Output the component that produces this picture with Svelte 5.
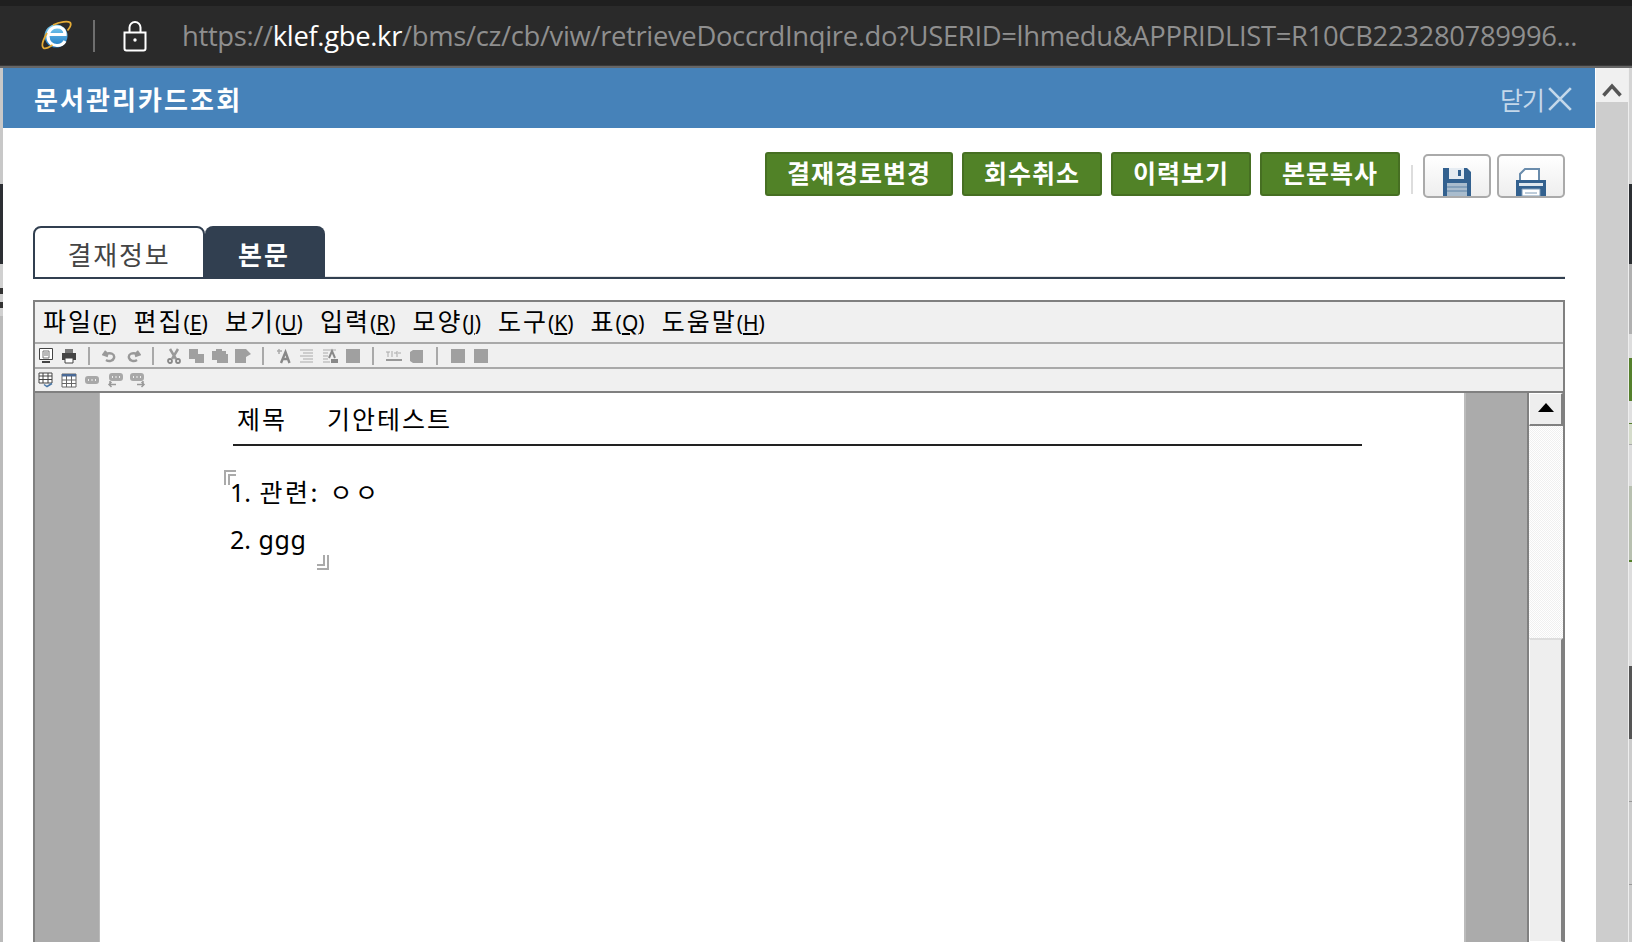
<script>
  const actions = ['결재경로변경', '회수취소', '이력보기', '본문복사'];
  const menus = [['파일', 'F'], ['편집', 'E'], ['보기', 'U'], ['입력', 'R'], ['모양', 'J'], ['도구', 'K'], ['표', 'Q'], ['도움말', 'H']];
  const rowOne = [
    ['screen', 'print', 'sep'],
    ['undo', 'redo', 'sep'],
    ['cut', 'copy', 'paste', 'format', 'sep'],
    ['font', 'lines', 'para', 'block', 'sep'],
    ['word', 'blob', 'sep'],
    ['block', 'block']
  ].flat();
  const rowTwo = ['tablecheck', 'table', 'pill', 'pillLeft', 'pillRight'];
</script>

{#snippet tool(name)}
  {#if name === 'sep'}
    <i class="sep"></i>
  {:else}
    <svg class="tool" viewBox="0 0 16 16" aria-hidden="true">
      {#if name === 'screen'}
        <path d="M1.500 .5h13v11h-13z" fill="#fff" stroke="#444"/><path d="M5 3h6v7H5z" fill="none" stroke="#777"/><path d="M6 5h4M6 7h4" stroke="#777"/><path d="M4 13h8v2H4z" fill="#444"/>
      {:else if name === 'print'}
        <path d="M4 1h8v4H4z" fill="#777"/><path d="M1 5h14v7H1z" fill="#444"/><path d="M4 10h8v5H4z" fill="#fff" stroke="#444"/>
      {:else if name === 'undo'}
        <path d="M4 3 1.500 6.500 6 8M3 6c6-2 10 0 9 4-1 3-5 4-8 2" fill="none" stroke="#999" stroke-width="2.400"/>
      {:else if name === 'redo'}
        <path d="M12 3l2.500 3.500L10 8M13 6C7 4 3 6 4 10c1 3 5 4 8 2" fill="none" stroke="#999" stroke-width="2.400"/>
      {:else if name === 'cut'}
        <path d="M4 1l6 10M12 1L6 11" stroke="#999" stroke-width="2.500"/><circle cx="4" cy="13" r="2" fill="none" stroke="#888" stroke-width="1.800"/><circle cx="12" cy="13" r="2" fill="none" stroke="#888" stroke-width="1.800"/>
      {:else if name === 'copy'}
        <path d="M0 1h9v5h6v9H6v-4H0z" fill="#a0a0a0"/>
      {:else if name === 'paste'}
        <path d="M0 3h4V1h6v2h4v3h2v9H5v-3H0z" fill="#a0a0a0"/>
      {:else if name === 'format'}
        <path d="M0 1h11l5 5-5 3v6H0z" fill="#a0a0a0"/>
      {:else if name === 'font'}
        <path d="M5 15 9.500 4l4 11M7 11h5" fill="none" stroke="#888" stroke-width="2.400"/><path d="M1 3h5M3 1v5" stroke="#aaa" stroke-width="1.500"/>
      {:else if name === 'lines'}
        <path d="M1 2h13M4 5h10M1 8h13M4 11h10M1 14h13" stroke="#aaa"/>
      {:else if name === 'para'}
        <path d="M1 2h13M1 5h5M1 8h5M1 11h5M1 14h7" stroke="#aaa"/><path d="M7 10l3-7 3 7" fill="none" stroke="#888" stroke-width="2"/><path d="M9 11h7v4H9z" fill="#888"/>
      {:else if name === 'block'}
        <path d="M1 1h14v14H1z" fill="#a0a0a0"/>
      {:else if name === 'word'}
        <path d="M0 4h4M2 4v5M6 3v6M8 5h3M11 3v6M12 5h3" stroke="#aaa"/><path d="M0 12h16" stroke="#999" stroke-width="2"/>
      {:else if name === 'blob'}
        <path d="M4 2h10v13H4l-3-2V4z" fill="#a0a0a0"/>
      {:else if name === 'tablecheck'}
        <path d="M1 1h13v10H1z" fill="#fff" stroke="#444"/><path d="M1 4h13M1 7.500h13M5 1v10M10 1v10" stroke="#444"/><path d="M6 12.500l3 2 5-3" fill="none" stroke="#4a78a8" stroke-width="1.500"/>
      {:else if name === 'table'}
        <path d="M1 2h14v13H1z" fill="#fff" stroke="#666"/><path d="M1 2h14v2.500H1z" fill="#4a6a96"/><path d="M1 8h14M1 11.500h14M5.500 4v11M10.500 4v11" stroke="#666"/>
      {:else if name === 'pill'}
        <rect x="1" y="4" width="14" height="8" rx="3" fill="#a8a8a8"/><path d="M4 8h1M7.500 8h1M11 8h1" stroke="#eee" stroke-width="2"/>
      {:else if name === 'pillLeft'}
        <rect x="2" y="1" width="14" height="8" rx="3" fill="#a8a8a8"/><path d="M5 5h1M8.500 5h1M12 5h1" stroke="#eee" stroke-width="2"/><path d="M9 12.500H2M4.500 10 2 12.500 4.500 15M3 9v3" fill="none" stroke="#999" stroke-width="1.500"/>
      {:else if name === 'pillRight'}
        <rect x="0" y="1" width="14" height="8" rx="3" fill="#a8a8a8"/><path d="M3 5h1M6.500 5h1M10 5h1" stroke="#eee" stroke-width="2"/><path d="M7 12.500h7M11.500 10l2.500 2.500-2.500 2.500M13 9v3" fill="none" stroke="#999" stroke-width="1.500"/>
      {/if}
    </svg>
  {/if}
{/snippet}

<div class="page">
  <header class="address">
    <svg class="ie" viewBox="0 0 32 32" aria-hidden="true">
      <defs>
        <linearGradient id="ieblue" x1="0" y1="0" x2="0" y2="1">
          <stop offset="0" stop-color="#7fd0f2"/><stop offset="1" stop-color="#1b78c4"/>
        </linearGradient>
      </defs>
      <circle cx="16" cy="16" r="11.500" fill="url(#ieblue)"/>
      <path d="M8 14.500h17c0-5-3.500-7.500-8-7.500-5 0-9 3.500-9 9.500 0 5.500 4 9 9 9 3.500 0 6.500-1.500 8-4.500" fill="none" stroke="#fff" stroke-width="3.200"/>
      <path d="M7 13C3 20 1 26 3.500 28c2 1.500 6-1 9-3M13 5c7-3.500 15-4 17-2.500 1.500 1.500 0 5-2.500 8" fill="none" stroke="#e5ac36" stroke-width="1.800"/>
    </svg>
    <i class="divider"></i>
    <svg class="lock" viewBox="0 0 26 32" aria-hidden="true">
      <path d="M2.500 12.500h21v16a2 2 0 0 1-2 2h-17a2 2 0 0 1-2-2zM7.500 12V7.500a5.500 5.500 0 0 1 11 0V12" fill="none" stroke="#fff" stroke-width="2"/>
      <circle cx="13" cy="20" r="1.700" fill="#fff"/>
    </svg>
    <div class="url">https://<b>klef.gbe.kr</b>/bms/cz/cb/viw/retrieveDoccrdInqire.do?USERID=lhmedu&amp;APPRIDLIST=R10CB223280789996...</div>
  </header>

  <div class="frame">
    <aside class="left-edge"></aside>
    <main class="modal">
      <div class="title">
        <h1>문서관리카드조회</h1>
        <div class="close">닫기
          <svg viewBox="0 0 24 24" aria-hidden="true"><path d="M2 2l20 20M22 2 2 22" stroke="#c4d8ea" stroke-width="2.500"/></svg>
        </div>
      </div>

      <div class="content">
        <div class="actions">
          {#each actions as label}
            <button class="green">{label}</button>
          {/each}
          <i class="act-sep"></i>
          <button class="icon-btn" aria-label="저장">
            <svg viewBox="0 0 28 28" aria-hidden="true">
              <path d="M0 0h24l4 4v24H0z" fill="#33618f"/><path d="M6 0h15v11H6z" fill="#e6ecf2"/><path d="M15 2h3v6h-3z" fill="#33618f"/><path d="M4 15h20v13H4z" fill="#a9bccd"/><path d="M4 19h20M4 23h20" stroke="#5f83a6"/>
            </svg>
          </button>
          <button class="icon-btn" aria-label="인쇄">
            <svg viewBox="0 0 32 28" aria-hidden="true">
              <path d="M10 1h14v12H5V6z" fill="#fff" stroke="#6a8cac" stroke-width="2"/>
              <path d="M1 12h30v16H1z" fill="#33618f"/><path d="M4 15h24v3H4z" fill="#dfe7ee"/><path d="M7 21h18v7H7z" fill="#fff" stroke="#7c9ab6"/><path d="M10 25h12" stroke="#7c9ab6"/>
            </svg>
          </button>
        </div>

        <div class="tabs">
          <div class="tab">결재정보</div>
          <div class="tab active">본문</div>
        </div>

        <section class="editor">
          <nav class="menu">
            {#each menus as [name, key]}
              <span class="menu-item">{name}<small>(<u>{key}</u>)</small></span>
            {/each}
          </nav>
          <div class="toolbar top">
            {#each rowOne as name}{@render tool(name)}{/each}
          </div>
          <div class="toolbar second">
            {#each rowTwo as name}{@render tool(name)}{/each}
          </div>
          <div class="workspace">
            <div class="margin-left"></div>
            <article class="sheet">
              <div class="subject"><span>제목</span><span class="subject-value">기안테스트</span></div>
              <div class="body-text">
                <span class="mark open"></span>
                <p>1. <span class="kr">관련:</span> <span class="kr jamo">ㅇ ㅇ</span></p>
                <p class="second-line">2. <span class="latin">ggg</span><span class="mark close-mark"></span></p>
              </div>
            </article>
            <div class="margin-right"></div>
            <div class="vscroll">
              <div class="arrow-btn"><span class="arrow"></span></div>
              <div class="dither"></div>
              <div class="thumb"></div>
            </div>
          </div>
        </section>
      </div>
    </main>
    <aside class="page-scroll">
      <div class="scroll-up">
        <svg viewBox="0 0 20 14" aria-hidden="true"><path d="M1.500 12.500 10 3l8.500 9.500" fill="none" stroke="#555" stroke-width="3.500"/></svg>
      </div>
      <div class="scroll-track"></div>
    </aside>
    <aside class="right-edge"></aside>
  </div>
</div>

<style>
  :global(body) { margin: 0; background: #fff; }
  .page {
    width: 1632px; height: 942px; overflow: hidden; display: flex; flex-direction: column;
    font-family: "Noto Sans CJK KR", "Noto Sans", sans-serif;
  }
  .address {
    height: 66px; box-sizing: border-box; background: #2a2a2a; border-top: 6px solid #1f1f1f; border-bottom: 1px solid #3a3a3a;
    display: flex; align-items: center; flex: none; padding-left: 40px;
  }
  .ie { width: 32px; height: 32px; flex: none; }
  .divider { width: 2px; height: 32px; background: #6e6e6e; margin-left: 21px; flex: none; }
  .lock { width: 26px; height: 32px; margin-left: 27px; flex: none; }
  .url {
    font-family: "Open Sans", sans-serif; font-size: 27.400px; color: #8f8f8f; margin-left: 34px; white-space: nowrap; letter-spacing: -0.330px;
  }
  .url b { color: #fff; font-weight: 400; }
  .frame { flex: 1; display: flex; border-top: 2px solid #666; min-height: 0; }
  .left-edge {
    width: 3px; flex: none;
    background: linear-gradient(#c8c8c8 0 116px, #2c2f33 116px 196px, #d0d0d0 196px 220px, #333 220px 226px, #d0d0d0 226px 234px, #333 234px 240px, #d0d0d0 240px 248px, #bbb 248px);
  }
  .modal { width: 1593px; flex: none; display: flex; flex-direction: column; background: #fff; }
  .title {
    height: 60px; flex: none; box-sizing: border-box; background: #4682b9; display: flex; align-items: center; justify-content: space-between;
    padding: 0 22px 0 31px; color: #fff; margin-right: 1px;
  }
  h1 { font-size: 26px; font-weight: 700; margin: 0; letter-spacing: 2.100px; }
  .close { display: flex; align-items: center; gap: 3px; color: #c4d8ea; font-size: 25px; letter-spacing: -1px; padding-top: 2px; }
  .close svg { width: 26px; height: 26px; }
  .content { padding: 24px 31px 0 30px; flex: 1; display: flex; flex-direction: column; min-height: 0; }
  .actions { display: flex; justify-content: flex-end; align-items: flex-start; height: 48px; }
  .green {
    height: 44px; box-sizing: border-box; border: 2px solid #466f22; border-radius: 3px; background: #518227; color: #fff;
    font: 700 25px/1 "Noto Sans CJK KR", sans-serif; padding: 0 20px 3px; margin-right: 9px; letter-spacing: 1px;
  }
  .act-sep { width: 2px; height: 29px; background: #ddd; margin: 13px 4px 0 2px; }
  .icon-btn {
    width: 68px; height: 44px; margin: 2px 0 0 6px; box-sizing: border-box; border: 2px solid #aaa; border-radius: 5px;
    background: linear-gradient(#fff, #eee); padding: 0; display: flex; justify-content: center; align-items: flex-end; overflow: hidden;
  }
  .icon-btn svg { width: 28px; height: 28px; display: block; }
  .icon-btn:last-child svg { width: 32px; }
  .tabs { display: flex; margin-top: 26px; height: 53px; box-sizing: border-box; border-bottom: 2px solid #313f50; box-shadow: inset 0 -1px 0 #e5e5e5; flex: none; }
  .tab {
    width: 172px; box-sizing: border-box; height: 53px; border: 2px solid #313f50; border-radius: 8px 8px 0 0; background: #fff; color: #444;
    font-size: 26px; text-align: center; line-height: 52px; letter-spacing: 1.800px;
  }
  .tab.active { width: 120px; background: #313f50; color: #fff; font-weight: 700; border-left: 0; letter-spacing: 2px; }
  .editor {
    margin-top: 21px; flex: 1; min-height: 0; display: flex; flex-direction: column; background: #f0f0f0; border: 2px solid #808080; border-bottom: 0;
  }
  .menu {
    height: 38px; padding: 0 0 2px 8px; flex: none; display: flex; gap: 17px; border-bottom: 2px solid #a9a9a9; align-items: center; color: #000; font-size: 25px; letter-spacing: 2px; line-height: 38px;
  }
  .menu-item { white-space: nowrap; }
  small { font-size: 21px; font-family: "Noto Sans", sans-serif; letter-spacing: 0; }
  .toolbar { height: 23px; flex: none; display: flex; align-items: center; padding-left: 3px; }
  .toolbar.top { gap: 7px; border-bottom: 2px solid #a9a9a9; }
  .toolbar.second { gap: 7px; height: 22px; border-bottom: 2px solid #808080; }
  .tool { width: 16px; height: 16px; flex: none; }
  .sep { width: 2px; height: 18px; background: #a9a9a9; margin: 0 5px 0 4px; flex: none; }
  .workspace { flex: 1; display: flex; min-height: 0; background: #fff; }
  .margin-left { width: 64px; background: #ababab; flex: none; border-right: 1px solid #bbb; }
  .margin-right { width: 61px; background: #ababab; flex: none; border-left: 2px solid #bbb; border-right: 2px solid #808080; }
  .sheet { flex: 1; min-width: 0; color: #000; padding: 0 102px 0 133px; position: relative; }
  .subject {
    height: 53px; padding: 0 0 2px 4px; border-bottom: 2px solid #222; font-size: 25px; display: flex; align-items: center; letter-spacing: 2px; box-sizing: border-box;
  }
  .subject-value { margin-left: 40px; }
  .body-text { position: relative; font-size: 25px; margin-left: -3px; padding-top: 27px; font-family: "Noto Sans", "Noto Sans CJK KR", sans-serif; }
  .body-text p { margin: 0; line-height: 36px; white-space: nowrap; }
  .kr { font-family: "Noto Sans CJK KR", sans-serif; letter-spacing: 2.500px; margin-left: 2px; }
  .jamo { margin-left: 3px; letter-spacing: -1.500px; }
  .latin { margin-left: 1px; letter-spacing: 0.600px; }
  .second-line { margin-top: 11px !important; position: relative; width: max-content; }
  .mark { position: absolute; width: 12px; height: 15px; border: 2px solid #aaa; box-sizing: border-box; }
  .mark.open { left: -6px; top: 24px; border-right: 0; border-bottom: 0; box-shadow: inset 2px 2px 0 #fff, inset 4px 4px 0 #aaa; }
  .mark.close-mark { right: -23px; top: 34px; border-left: 0; border-top: 0; box-shadow: inset -2px -2px 0 #fff, inset -4px -4px 0 #aaa; }
  .vscroll { width: 34px; flex: none; display: flex; flex-direction: column; }
  .arrow-btn {
    height: 33px; box-sizing: border-box; background: #eee; border: 1px solid #fff; border-right: 2px solid #808080; border-bottom: 2px solid #808080;
    display: flex; align-items: center; justify-content: center;
  }
  .arrow { width: 0; height: 0; border: 8.500px solid transparent; border-top: 0; border-bottom: 9px solid #000; margin-bottom: 3px; }
  .dither {
    height: 212px; background-color: #fafafa;
    background-image: repeating-conic-gradient(#f0f0f0 0 25%, #fff 0 50%); background-size: 2px 2px;
  }
  .thumb { flex: 1; background: #eee; border: 1px solid #fff; border-top: 2px solid #ddd; border-right: 2px solid #808080; }
  .page-scroll { width: 32px; flex: none; display: flex; flex-direction: column; }
  .scroll-up { height: 34px; background: #f0f0f0; display: flex; justify-content: center; align-items: flex-start; box-sizing: border-box; }
  .scroll-up svg { width: 20px; height: 14px; margin-top: 15px; }
  .scroll-track { flex: 1; background: #cdcdcd; }
  .right-edge {
    width: 4px; flex: none; box-sizing: border-box; border-left: 1px solid #eee;
    background: linear-gradient(#d4d4d4 0 116px, #2c2f33 116px 196px, #b0b0b0 196px 266px, #ddd 266px 290px, #55802c 290px 333px, #e0e0e0 333px 355px, #55802c 355px 356px, #d5dccb 356px 376px, #aaa 376px 377px, #ddd 377px 418px, #b8c0b0 418px 492px, #55802c 492px 494px, #ddd 494px 598px, #555 598px 671px, #ccc 671px 733px, #999 733px 734px, #ccc 734px 816px, #999 816px 817px, #ccc 817px);
  }
</style>
